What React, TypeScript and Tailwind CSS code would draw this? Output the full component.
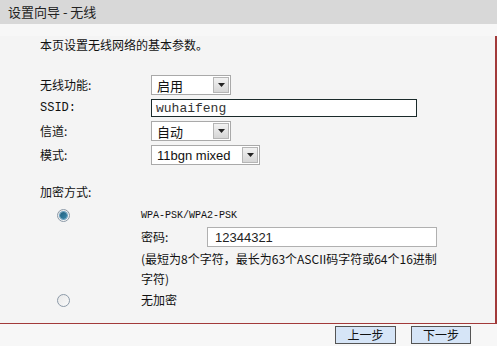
const cn = { fontFamily: '"SimSun", "Noto Sans CJK SC", "Liberation Sans", sans-serif' };
const mono = { fontFamily: '"Liberation Mono", "Noto Sans CJK SC", monospace' };
const sans = { fontFamily: '"Liberation Sans", "Noto Sans CJK SC", sans-serif' };

function Arrow() {
  return (
    <div className="flex h-[16px] w-[16px] items-center justify-center border border-[#b5b5b5] bg-gradient-to-b from-[#f2f2f2] to-[#d6d6d6]">
      <svg width="7" height="4" viewBox="0 0 7 4">
        <path d="M0 0H7L3.5 4Z" fill="#222" />
      </svg>
    </div>
  );
}

function SelectBox({ value, width, font }: { value: string; width: string; font?: React.CSSProperties }) {
  return (
    <div className={`flex h-[20px] items-center justify-between border border-[#a9a9a9] bg-white pl-[5px] pr-[1px] ${width}`}>
      <span className="text-[13px] leading-none text-[#111]" style={font ?? cn}>
        {value}
      </span>
      <Arrow />
    </div>
  );
}

function Radio({ checked }: { checked?: boolean }) {
  return (
    <div className="flex h-[13px] w-[13px] items-center justify-center rounded-full border border-[#8c9aa8] bg-gradient-to-br from-[#e8e8e8] to-[#fafafa]">
      {checked && <div className="h-[7px] w-[7px] rounded-full bg-gradient-to-br from-[#1d5f7e] to-[#3b88ad] ring-1 ring-[#6aa0c0]" />}
    </div>
  );
}

function Row({ label, children, labelFont, className }: { label: string; children: React.ReactNode; labelFont?: React.CSSProperties; className?: string }) {
  return (
    <div className={`flex items-center ${className ?? ''}`}>
      <div className="w-[111px] text-[12px] text-[#111]" style={labelFont ?? cn}>
        {label}
      </div>
      {children}
    </div>
  );
}

export default function App() {
  return (
    <div className="h-[346px] w-[497px] overflow-hidden bg-[#f7f7f7]" style={cn}>
      <div className="flex h-[24px] items-center bg-[#d8d8d8] pl-[8px] text-[13px] text-[#222]">
        设置向导 - 无线
      </div>
      <div className="border-r-2 border-b border-[#a23a3a] bg-[#f4f4f4] pl-[40px]">
        <div className="mt-[12px] flex h-[18px] items-center text-[12px] text-[#111]">
          本页设置无线网络的基本参数。
        </div>
        <Row label="无线功能:" className="mt-[21px] h-[20px]">
          <SelectBox value="启用" width="w-[80px]" />
        </Row>
        <Row label="SSID:" labelFont={mono} className="mt-[4px] h-[18px]">
          <div className="flex h-[18px] w-[266px] items-center border border-[#1a2a2a] bg-white pl-[4px]">
            <span className="text-[13px] leading-none text-[#333]" style={mono}>
              wuhaifeng
            </span>
          </div>
        </Row>
        <Row label="信道:" className="mt-[4px] h-[20px]">
          <SelectBox value="自动" width="w-[80px]" />
        </Row>
        <Row label="模式:" className="mt-[4px] h-[20px]">
          <SelectBox value="11bgn mixed" width="w-[109px]" font={sans} />
        </Row>
        <div className="mt-[18px] flex h-[18px] items-center text-[12px] text-[#111]">加密方式:</div>
        <div className="mt-[4px] flex h-[20px] items-center">
          <div className="w-[101px] pl-[17px]">
            <Radio checked />
          </div>
          <span className="text-[10px] text-[#111]" style={mono}>
            WPA-PSK/WPA2-PSK
          </span>
        </div>
        <div className="mt-[2px] flex h-[20px] items-center pl-[101px]">
          <div className="w-[66px] text-[12px] text-[#111]">密码:</div>
          <div className="flex h-[20px] w-[230px] items-center border border-[#b0b0b0] bg-white pl-[7px]">
            <span className="text-[13px] leading-none text-[#222]" style={sans}>
              12344321
            </span>
          </div>
        </div>
        <div className="mt-[2px] pl-[101px] text-[12px] leading-[20px] whitespace-nowrap text-[#111]">
          (最短为8个字符，最长为63个ASCII码字符或64个16进制
          <br />
          字符)
        </div>
        <div className="mt-[1px] flex h-[20px] items-center">
          <div className="w-[101px] pl-[17px]">
            <Radio />
          </div>
          <span className="text-[12px] text-[#111]">无加密</span>
        </div>
        <div className="h-[13px]" />
      </div>
      <div className="mt-[2px] flex justify-end gap-[15px] pr-[26px]">
        <button className="h-[18px] w-[61px] border border-[#555] bg-[#d6e5f7] text-[12px] leading-none text-[#111]" style={cn}>
          上一步
        </button>
        <button className="h-[18px] w-[60px] border border-[#555] bg-[#d6e5f7] text-[12px] leading-none text-[#111]" style={cn}>
          下一步
        </button>
      </div>
    </div>
  );
}
